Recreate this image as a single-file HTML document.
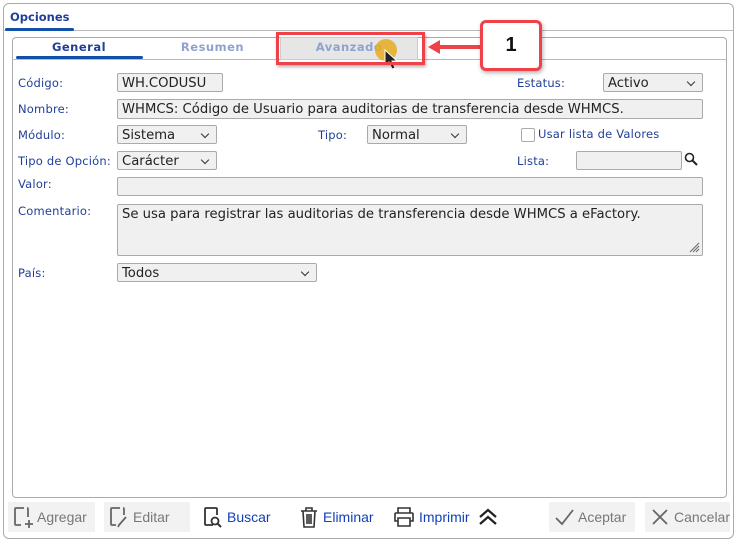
<!DOCTYPE html>
<html><head><meta charset="utf-8"><style>
*{box-sizing:border-box;margin:0;padding:0}
body{width:738px;height:541px;background:#fff;font-family:"DejaVu Sans","Liberation Sans",sans-serif;position:relative;overflow:hidden}
.a{position:absolute}
.lbl{position:absolute;font-size:11.5px;color:#1f3f9a;letter-spacing:0.2px}
.in{position:absolute;background:#f0f0f0;border:1px solid #aaa;border-radius:2px;font-size:13.2px;color:#222;padding:2px 4px 0;line-height:16px;white-space:nowrap;overflow:hidden}
.sel::after{content:"";position:absolute;right:8px;top:5px;width:5px;height:5px;border-right:1.3px solid #333;border-bottom:1.3px solid #333;transform:rotate(45deg)}
.btn{position:absolute;top:502px;height:30px;font-size:14px;font-family:"Liberation Sans",sans-serif;display:flex;align-items:center;gap:3px;padding-left:4px}
.g{background:#f2f2f2;color:#777}
.b{color:#1240b5}
</style></head><body>
<div class="a" style="left:3px;top:3px;width:731px;height:536px;border:1px solid #aaa;border-radius:6px"></div>
<div class="a" style="left:3px;top:30px;width:731px;border-top:1px solid #bbb"></div>
<div class="a" style="left:10px;top:10px;font-size:11.5px;font-weight:bold;color:#1f3f9a">Opciones</div>
<div class="a" style="left:5px;top:28px;width:69px;height:3px;background:#1150a8;border-radius:2px"></div>

<div class="a" style="left:12px;top:37px;width:715px;height:461px;border:1px solid #aaa;border-radius:4px"></div>
<div class="a" style="left:12px;top:59px;width:715px;border-top:1px solid #bbb"></div>
<div class="a" style="left:16px;top:40px;width:126px;text-align:center;font-size:11.5px;font-weight:bold;color:#1f3f9a;letter-spacing:0.5px">General</div>
<div class="a" style="left:16px;top:56px;width:127px;height:3px;background:#1150a8;border-radius:2px"></div>
<div class="a" style="left:145px;top:40px;width:135px;text-align:center;font-size:11.5px;font-weight:bold;color:#8fa3cf;letter-spacing:0.5px">Resumen</div>
<div class="a" style="left:280px;top:37px;width:138px;height:23px;background:#e6e6e6;border:1px solid #ccc"></div>
<div class="a" style="left:280px;top:40px;width:138px;text-align:center;font-size:11.5px;font-weight:bold;color:#8fa3cf;letter-spacing:0.5px">Avanzado</div>
<div class="a" style="left:375px;top:39px;width:22px;height:22px;border-radius:50%;background:rgba(230,170,30,0.85)"></div>
<svg class="a" style="left:383px;top:48px" width="18" height="24"><path d="M2 2 L2 18 L6 14 L9 21 L12 20 L9 13 L14 13 Z" fill="#222" stroke="#fff" stroke-width="1"/></svg>
<div class="a" style="left:276px;top:32px;width:149px;height:33px;border:3px solid #f04048;box-shadow:1px 2px 3px rgba(0,0,0,.3)"></div>
<svg class="a" style="left:424px;top:36px" width="60" height="22"><path d="M4 11 L16 4 L16 9 L58 9 L58 13 L16 13 L16 18 Z" fill="#f04048"/></svg>
<div class="a" style="left:480px;top:20px;width:62px;height:51px;border:3px solid #f04048;border-radius:6px;background:#fff;box-shadow:1px 2px 4px rgba(0,0,0,.3);text-align:center;font:bold 20px/45px 'Liberation Sans',sans-serif;color:#111">1</div>

<div class="lbl" style="left:18px;top:76px">Código:</div>
<div class="in" style="left:117px;top:73px;width:106px;height:19px">WH.CODUSU</div>
<div class="lbl" style="left:517px;top:76px">Estatus:</div>
<div class="in sel" style="left:603px;top:73px;width:100px;height:19px">Activo</div>
<div class="lbl" style="left:18px;top:102px">Nombre:</div>
<div class="in" style="left:117px;top:99px;width:586px;height:20px">WHMCS: Código de Usuario para auditorias de transferencia desde WHMCS.</div>
<div class="lbl" style="left:18px;top:128px">Módulo:</div>
<div class="in sel" style="left:117px;top:125px;width:100px;height:19px">Sistema</div>
<div class="lbl" style="left:318px;top:128px">Tipo:</div>
<div class="in sel" style="left:367px;top:125px;width:100px;height:19px">Normal</div>
<div class="a" style="left:521px;top:128px;width:14px;height:14px;border:1.5px solid #aaa;border-radius:2px"></div>
<div class="lbl" style="left:538px;top:127px">Usar lista de Valores</div>
<div class="lbl" style="left:18px;top:154px">Tipo de Opción:</div>
<div class="in sel" style="left:117px;top:151px;width:100px;height:19px">Carácter</div>
<div class="lbl" style="left:517px;top:154px">Lista:</div>
<div class="in" style="left:576px;top:151px;width:106px;height:19px"></div>
<svg class="a" style="left:684px;top:152px" width="14" height="14"><circle cx="5.5" cy="5.5" r="4" fill="none" stroke="#222" stroke-width="1.6"/><path d="M8.5 8.5 L13 13" stroke="#222" stroke-width="2"/></svg>
<div class="lbl" style="left:18px;top:177px">Valor:</div>
<div class="in" style="left:117px;top:177px;width:586px;height:19px"></div>
<div class="lbl" style="left:18px;top:204px">Comentario:</div>
<div class="in" style="left:117px;top:204px;width:586px;height:52px">Se usa para registrar las auditorias de transferencia desde WHMCS a eFactory.</div>
<svg class="a" style="left:688px;top:241px" width="12" height="12"><path d="M11 2 L2 11 M11 5 L5 11 M11 8 L8 11" stroke="#666" stroke-width="1"/></svg>
<div class="lbl" style="left:18px;top:266px">País:</div>
<div class="in sel" style="left:117px;top:263px;width:200px;height:19px">Todos</div>

<div class="btn g" style="left:8px;width:87px"><svg width="22" height="24"><path d="M12 3 H4 Q3 3 3 4 V19 Q3 20 4 20 H9 M15 3 Q16 3 16 4 V12" fill="none" stroke="#666" stroke-width="1.8"/><path d="M17 15 V23 M13 19 H21" stroke="#666" stroke-width="1.8"/></svg>Agregar</div>
<div class="btn g" style="left:104px;width:86px"><svg width="22" height="24"><path d="M12 3 H4 Q3 3 3 4 V19 Q3 20 4 20 H8 M15 3 Q16 3 16 4 V10" fill="none" stroke="#666" stroke-width="1.8"/><path d="M18 12 L11 20 L10 22" fill="none" stroke="#666" stroke-width="1.8"/></svg>Editar</div>
<div class="btn b" style="left:198px;width:80px"><svg width="22" height="24"><path d="M11 20 H4 Q3 20 3 19 V4 Q3 3 4 3 H14 Q15 3 15 4 V10" fill="none" stroke="#333" stroke-width="1.8"/><circle cx="13" cy="16" r="3.5" fill="none" stroke="#333" stroke-width="1.8"/><path d="M15.5 18.5 L19 22" stroke="#333" stroke-width="2"/></svg>Buscar</div>
<div class="btn b" style="left:294px;width:80px"><svg width="22" height="24"><path d="M3 6 H19 M8 6 V3 H14 V6 M5 6 L6 22 H16 L17 6 M9 9 V19 M11 9 V19 M13 9 V19" fill="none" stroke="#333" stroke-width="1.6"/></svg>Eliminar</div>
<div class="btn b" style="left:388px;width:84px"><svg width="24" height="24"><path d="M6 8 V3 H18 V8 M4 8 H20 Q21 8 21 9 V16 H18 M6 16 H3 V9 Q3 8 4 8 M6 13 H18 V21 H6 Z" fill="none" stroke="#333" stroke-width="1.6"/></svg>Imprimir</div>
<svg class="a" style="left:477px;top:507px" width="22" height="20"><path d="M3 10 L11 3 L19 10 M3 17 L11 10 L19 17" fill="none" stroke="#222" stroke-width="2.2"/></svg>
<div class="btn g" style="left:549px;width:86px"><svg width="22" height="24"><path d="M3 13 L9 19 L20 5" fill="none" stroke="#666" stroke-width="1.8"/></svg>Aceptar</div>
<div class="btn g" style="left:645px;width:85px"><svg width="22" height="24"><path d="M4 5 L18 19 M18 5 L4 19" stroke="#666" stroke-width="1.8"/></svg>Cancelar</div>
</body></html>
